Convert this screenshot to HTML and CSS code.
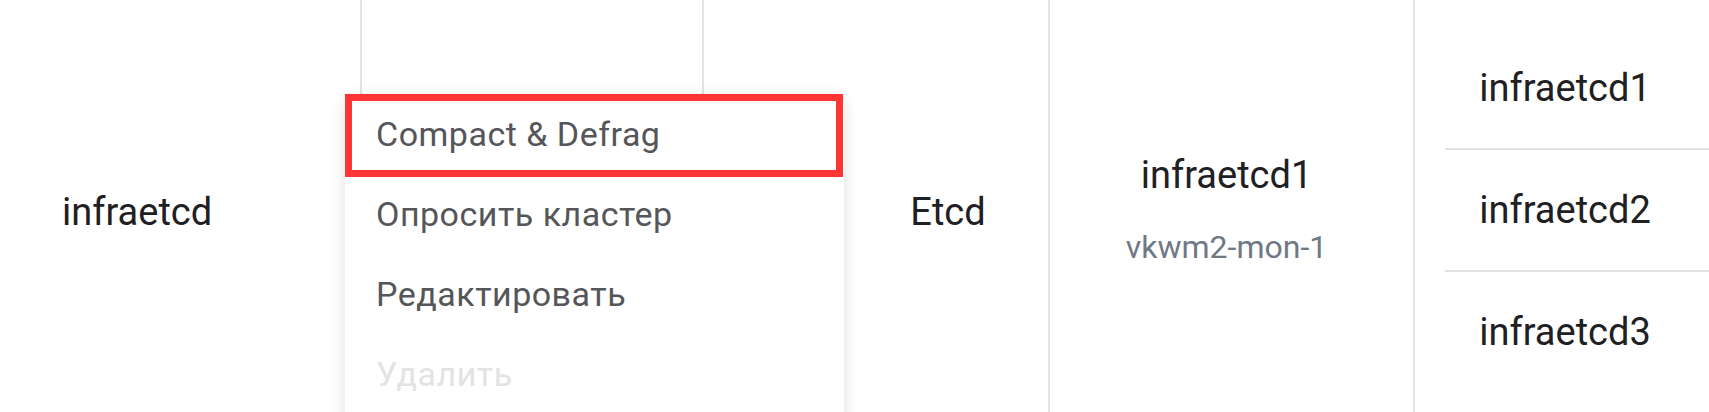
FILE: index.html
```html
<!DOCTYPE html>
<html lang="ru">
<head>
<meta charset="utf-8">
<title>Etcd clusters</title>
<link rel="stylesheet" href="styles.css">
</head>
<body>
<div class="page">
  <div class="table-row">
    <div class="cell cell-name">infraetcd</div>
    <div class="cell cell-actions"></div>
    <div class="cell cell-gap"></div>
    <div class="cell cell-type">Etcd</div>
    <div class="cell cell-leader">
      <div class="stack">
        <div class="stack-title">infraetcd1</div>
        <div class="stack-sub">vkwm2-mon-1</div>
      </div>
    </div>
    <div class="cell cell-members">
      <div class="member">infraetcd1</div>
      <div class="member">infraetcd2</div>
      <div class="member">infraetcd3</div>
    </div>
  </div>

  <div class="menu">
    <div class="menu-item menu-item-focused">Compact &amp; Defrag</div>
    <div class="menu-item">Опросить кластер</div>
    <div class="menu-item">Редактировать</div>
    <div class="menu-item menu-item-disabled">Удалить</div>
  </div>
</div>
</body>
</html>
```

FILE: styles.css
```css
html, body {
  margin: 0;
  padding: 0;
  background: #ffffff;
}

body {
  font-family: Roboto, "Noto Sans", Arial, sans-serif;
  color: #1f2023;
  overflow: hidden;
}

.page {
  position: relative;
  width: 1709px;
  height: 412px;
  overflow: hidden;
}

.table-row {
  display: grid;
  grid-template-columns: 360px 342px 142px 204px 365px 1fr;
  height: 412px;
}

.cell {
  display: flex;
  align-items: center;
  box-sizing: border-box;
  padding-top: 12px;
  font-size: 38px;
  min-width: 0;
}

.cell-name {
  padding-left: 62px;
}

.cell-actions {
  border-left: 2px solid #e1e4e8;
}

.cell-gap {
  border-left: 2px solid #e1e4e8;
}

.cell-type {
  justify-content: center;
  padding-left: 4px;
}

.cell-leader {
  border-left: 2px solid #e1e4e8;
  justify-content: center;
  padding-top: 6px;
  padding-right: 10px;
}

.stack {
  display: flex;
  flex-direction: column;
  align-items: center;
}

.stack-title {
  line-height: 44px;
}

.stack-sub {
  margin-top: 31px;
  font-size: 32px;
  line-height: 38px;
  color: #6f7884;
}

.cell-members {
  border-left: 2px solid #e1e4e8;
  flex-direction: column;
  align-items: stretch;
  justify-content: flex-start;
  padding-top: 28px;
}

.member {
  height: 120px;
  margin-left: 30px;
  padding-right: 24px;
  display: flex;
  align-items: center;
  justify-content: center;
}

.member + .member {
  border-top: 2px solid #e1e1e1;
}

.menu {
  position: absolute;
  left: 345px;
  top: 94px;
  width: 499px;
  height: 330px;
  background: #ffffff;
  border-radius: 10px;
  box-shadow: 0 3px 16px rgba(0, 0, 0, 0.13);
}

.menu-item {
  position: relative;
  height: 80px;
  line-height: 80px;
  padding-left: 31px;
  font-size: 34px;
  letter-spacing: 0.5px;
  color: #555659;
  white-space: nowrap;
}

.menu-item-focused::after {
  content: "";
  position: absolute;
  left: 0;
  top: 0;
  width: 498px;
  height: 83px;
  box-sizing: border-box;
  border: 7px solid #ff3535;
}

.menu-item-disabled {
  color: #e3e3e3;
}
```
